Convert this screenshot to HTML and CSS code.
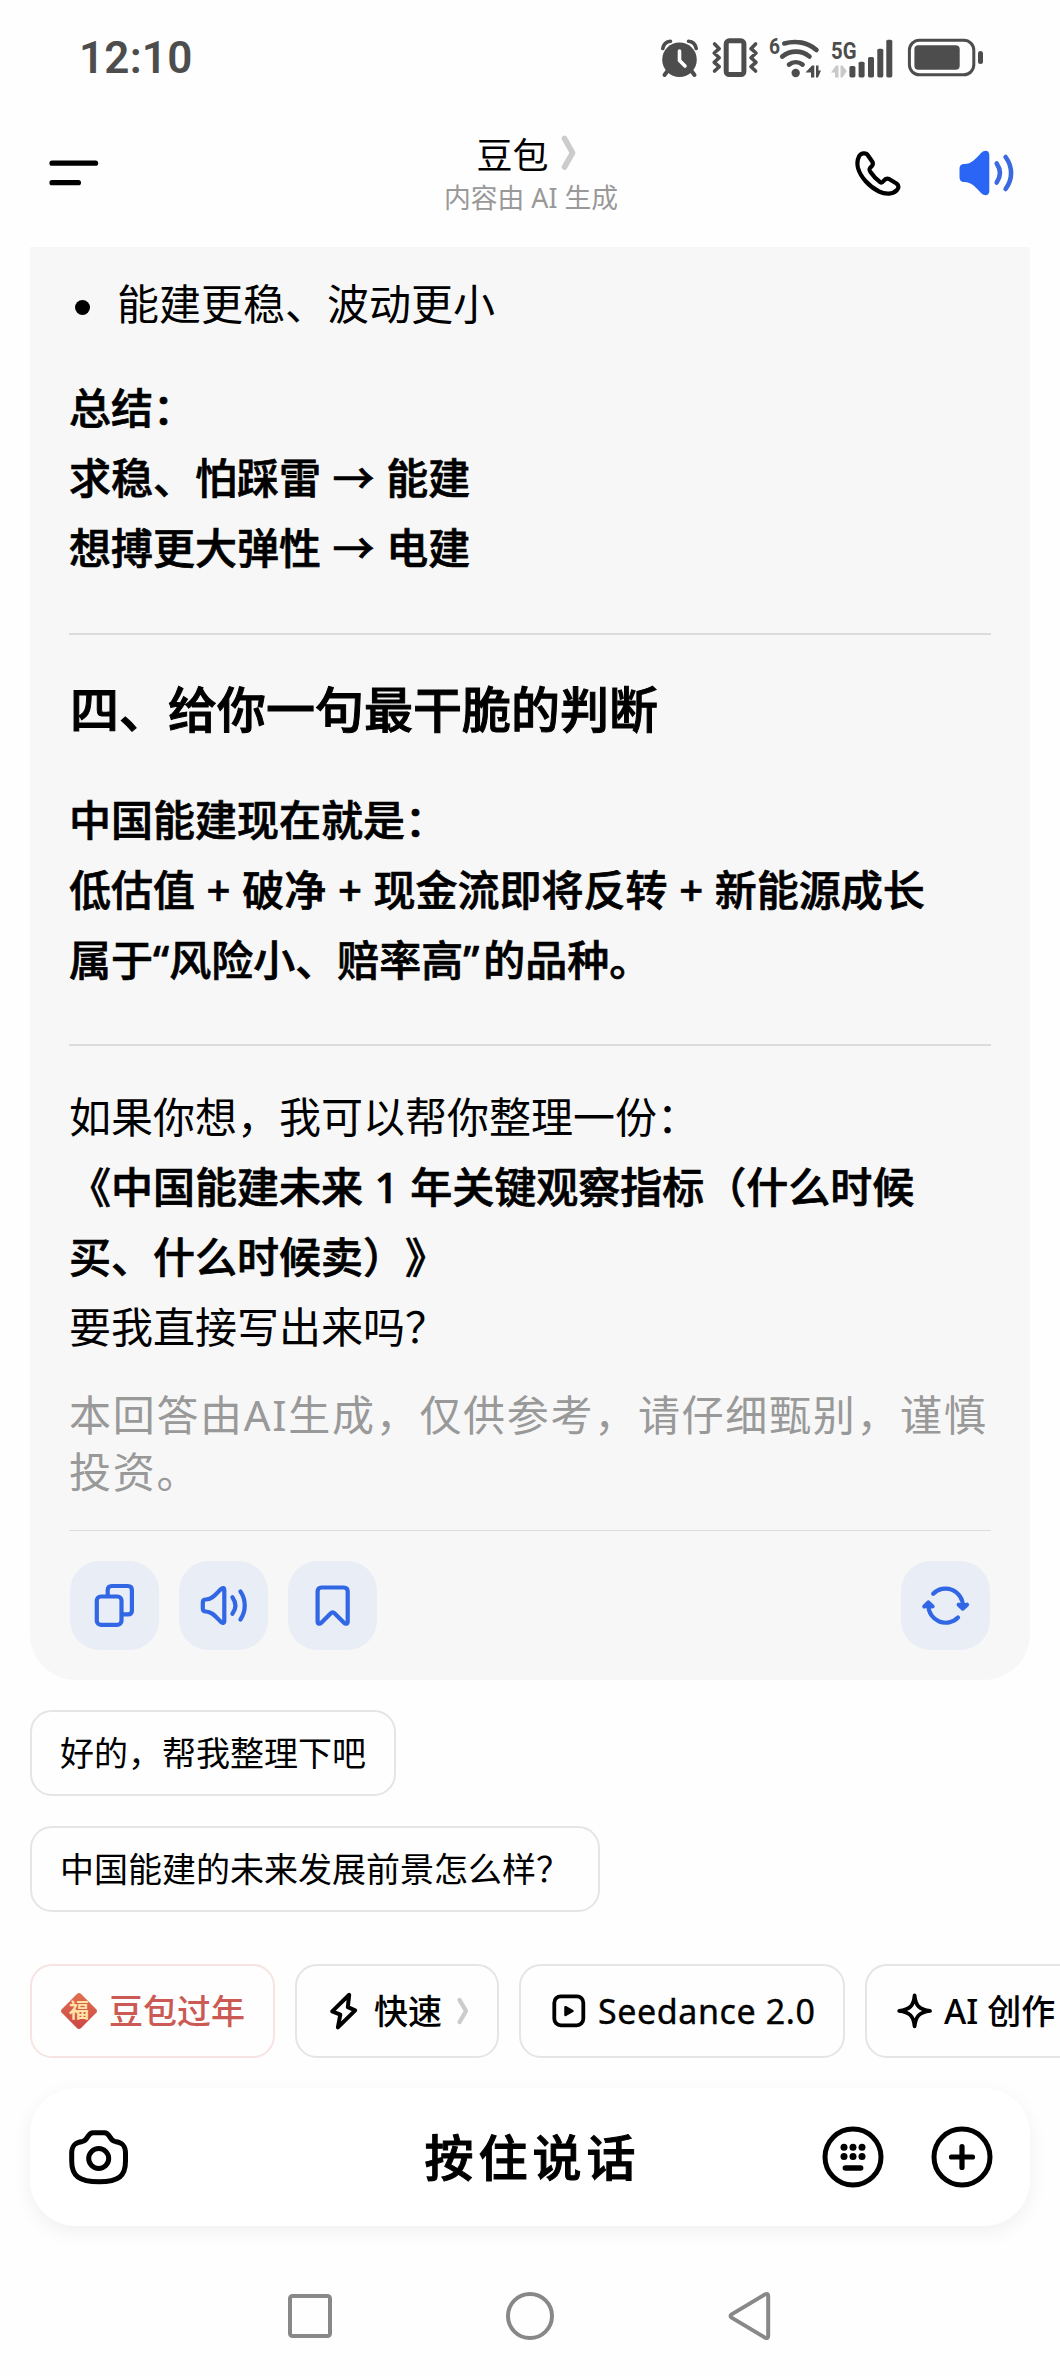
FILE: index.html
```html
<!DOCTYPE html>
<html lang="zh-CN">
<head>
    <meta charset="UTF-8">
    <meta name="viewport" content="width=device-width, initial-scale=1.0">
    <title>豆包</title>
    <link rel="stylesheet" href="styles.css">
</head>
<body>
    <div class="status-bar">
        <span class="time">12:10</span>
        <div class="status-icons">
            <!-- alarm -->
            <svg class="alarm" width="38" height="40" viewBox="0 0 38 40">
                <circle cx="18.5" cy="21.7" r="17.3" fill="#4d4d4d"/>
                <path d="M1.8 10.5C2.5 6.5 5.5 3.6 9.5 3.2M35.2 10.5C34.5 6.5 31.5 3.6 27.5 3.2" stroke="#4d4d4d" stroke-width="3.6" fill="none" stroke-linecap="round"/>
                <path d="M6.5 33L3.5 37M30.5 33L33.5 37" stroke="#4d4d4d" stroke-width="4" stroke-linecap="round"/>
                <path d="M18.5 13V22.5L24 28" stroke="#fff" stroke-width="3.6" fill="none" stroke-linecap="round" stroke-linejoin="round"/>
            </svg>
            <!-- vibrate -->
            <svg class="vibrate" width="47" height="40" viewBox="0 0 47 40">
                <rect x="14.2" y="2.8" width="17.7" height="33.7" rx="3" fill="none" stroke="#4d4d4d" stroke-width="5"/>
                <path d="M2.6 6L7.2 10.7L2.2 15L7.2 19.7L2.2 24.3L7.2 28.7L2.6 33M43.6 6L39 10.7L44 15L39 19.7L44 24.3L39 28.7L43.6 33" fill="none" stroke="#4d4d4d" stroke-width="3.6" stroke-linejoin="round" stroke-linecap="round"/>
            </svg>
            <!-- wifi 6 -->
            <svg class="wifi" width="52" height="42" viewBox="0 0 52 42">
                <text x="0" y="17" font-size="22" font-weight="700" textLength="11" lengthAdjust="spacingAndGlyphs" fill="#4d4d4d">6</text>
                <g fill="none" stroke="#4d4d4d" stroke-width="4.6" stroke-linecap="round">
                    <path d="M15.3 6.5C27 3 39 5.5 47.5 13"/>
                    <path d="M13.2 19.6C21.5 13 32.5 13 40.5 19.6"/>
                    <path d="M20 27.6C24 24.5 29.5 24.5 33.6 27.6"/>
                </g>
                <circle cx="26.7" cy="36" r="4.2" fill="#4d4d4d"/>
                <path d="M36.5 35.5L43 28.5H45.3V40.5H42V35.5ZM47 28.5H49.5V33.5H52L49 40.5H47Z" fill="#4d4d4d"/>
            </svg>
            <!-- 5G signal -->
            <svg class="signal" width="62" height="42" viewBox="0 0 62 42">
                <text x="0" y="21.5" font-size="24.5" font-weight="700" textLength="25.5" lengthAdjust="spacingAndGlyphs" fill="#4d4d4d">5G</text>
                <path d="M0 35.5L5 28.5H7.5V40.5H4V35.5ZM9.5 28.5H11.5L15.8 34L11.5 40.5H9.5Z" fill="#c9c9c9"/>
                <g fill="#4d4d4d">
                    <rect x="18.4" y="29" width="6" height="11.4" rx="1.6"/>
                    <rect x="27.6" y="24.7" width="6" height="15.7" rx="1.6"/>
                    <rect x="37" y="20" width="6" height="20.4" rx="1.6"/>
                    <rect x="46.3" y="11.7" width="6" height="28.7" rx="1.6"/>
                    <rect x="55.3" y="2.7" width="6" height="37.7" rx="1.6"/>
                </g>
            </svg>
            <!-- battery -->
            <svg class="battery" width="77" height="40" viewBox="0 0 77 40">
                <rect x="2.4" y="2.2" width="64.4" height="34.6" rx="10" fill="none" stroke="#4d4d4d" stroke-width="3"/>
                <rect x="7.4" y="7.3" width="45.3" height="24.4" rx="4" fill="#4d4d4d"/>
                <rect x="71" y="13" width="5" height="13" rx="2.5" fill="#4d4d4d"/>
            </svg>
        </div>
    </div>

    <header class="header">
        <svg class="menu" width="50" height="26" viewBox="0 0 50 26">
            <path d="M3 3.2H46.6M3 22.7H29.4" stroke="#000" stroke-width="5.2" stroke-linecap="round"/>
        </svg>
        <div class="title-box">
            <h1 class="title">豆包
                <svg width="15" height="36" viewBox="0 0 15 36">
                    <path d="M3.5 3.5L11.6 17.8L3.5 32" fill="none" stroke="#ccc" stroke-width="5.6" stroke-linecap="round" stroke-linejoin="round"/>
                </svg>
            </h1>
            <p class="subtitle">内容由 AI 生成</p>
        </div>
        <div class="header-actions">
            <svg width="48" height="48" viewBox="0 0 48 48">
                <path d="M5 7.5C6.5 4 12 3 14 6.5L18.5 13C19.5 15 19 16 17.5 17.5C15 19.5 14.8 20.5 16.5 23C19.5 27.5 22.5 30.5 26 33C27.5 34 28 34 29.5 32C31.5 29.3 33 29 35 30L42.5 34.5C45 36.5 45 39 43 41C39 45.5 31.5 45.5 25 42.5C15 37.5 6.5 28 4 19C3 15 3.3 11 5 7.5Z" fill="none" stroke="#000" stroke-width="4.2" stroke-linejoin="round"/>
            </svg>
            <svg width="58" height="48" viewBox="0 0 58 48">
                <path d="M1.5 20.5C1.5 16.5 3 15 6.5 15C13.5 15 17.5 10 23 4C27 .2 31.3 1.5 31.3 6V42C31.3 46.5 27 47.8 23 44C17.5 38 13.5 33 6.5 33C3 33 1.5 31.5 1.5 27.5Z" fill="#2a65f6"/>
                <path d="M38.7 14.5C42.8 20.5 42.8 27.5 38.7 33.5M47.6 8C54.9 18 54.9 30 47.6 40" fill="none" stroke="#3b6ae0" stroke-width="4.6" stroke-linecap="round"/>
            </svg>
        </div>
    </header>

    <main class="answer">
        <ul class="list">
            <li>能建更稳、波动更小</li>
        </ul>
        <p class="strong">总结：<br>求稳、怕踩雷 → 能建<br>想搏更大弹性 → 电建</p>
        <hr>
        <h2>四、给你一句最干脆的判断</h2>
        <p class="strong">中国能建现在就是：<br>低估值 + 破净 + 现金流即将反转 + 新能源成长<br>属于“风险小、赔率高<span class="quote">”</span>的品种。</p>
        <hr>
        <p class="ask">如果你想，我可以帮你整理一份：<br><b>《中国能建未来 1 年关键观察指标（什么时候买、什么时候卖）》</b><br>要我直接写出来吗？</p>
        <p class="disclaimer">本回答由AI生成，仅供参考，请仔细甄别，谨慎投资。</p>
        <div class="actions">
            <button class="action-btn">
                <svg width="48" height="48" viewBox="0 0 48 48">
                    <rect x="5.8" y="14.5" width="24.7" height="28.3" rx="4"/>
                    <path d="M16.7 13.5V8Q16.7 4 20.7 4H36.9Q40.9 4 40.9 8V28.4Q40.9 32.4 36.9 32.4H32"/>
                </svg>
            </button>
            <button class="action-btn">
                <svg width="48" height="48" viewBox="0 0 48 48">
                    <path d="M2.8 20.5Q2.8 17.5 5.8 17.5C12 17.5 15.5 12.5 20.8 7.2C22.8 5.2 24.3 5.8 24.3 8.2V38.8C24.3 41.2 22.8 41.8 20.8 39.8C15.5 34.5 12 29.5 5.8 29.5Q2.8 29.5 2.8 26.5Z"/>
                    <path d="M32.4 15.2C36.2 20.5 36.2 26.5 32.4 31.8M40.4 9.4C46.2 18 46.2 29 40.4 37.6"/>
                </svg>
            </button>
            <button class="action-btn">
                <svg width="48" height="48" viewBox="0 0 48 48">
                    <path d="M8.6 9.5Q8.6 5.5 12.6 5.5H34.7Q38.7 5.5 38.7 9.5V39.5C38.7 42 36.5 42.3 35 40.8L25.5 31.3Q23.6 29.4 21.8 31.3L12.3 40.8C10.8 42.3 8.6 42 8.6 39.5Z"/>
                </svg>
            </button>
            <button class="action-btn refresh">
                <svg width="48" height="48" viewBox="0 0 48 48">
                    <path d="M11.2 11.8A17.3 17.3 0 0 1 40.9 24M36 35.6A17.3 17.3 0 0 1 6.4 23.5"/>
                    <path d="M36.7 22.7L40.9 26.6L45 22.7L40.9 23.6ZM2.3 24.4L6.4 20.4L10.6 24.4L6.4 23.4Z" fill="#3166e4"/>
                </svg>
            </button>
        </div>
    </main>

    <div class="suggestions">
        <button class="suggestion">好的，帮我整理下吧</button>
        <button class="suggestion">中国能建的未来发展前景怎么样？</button>
    </div>

    <div class="tools">
        <button class="tool festival">
            <svg width="38" height="38" viewBox="0 0 38 38">
                <defs>
                    <linearGradient id="red" x1="0" y1="0" x2="1" y2="1">
                        <stop offset="0" stop-color="#e2714f"/>
                        <stop offset="1" stop-color="#cb4548"/>
                    </linearGradient>
                </defs>
                <rect x="5.5" y="5.5" width="27" height="27" rx="3" transform="rotate(45 19 19)" fill="url(#red)"/>
                <text class="fu" x="19" y="26" text-anchor="middle">福</text>
            </svg>
            豆包过年
        </button>
        <button class="tool">
            <svg width="38" height="38" viewBox="0 0 38 38">
                <path d="M24.2 2.8L22.8 15.2L30.2 18.3L12.9 35.4L15.3 22.6L7.2 19.4Z" fill="none" stroke="#000" stroke-width="4" stroke-linejoin="round"/>
            </svg>
            快速
            <svg class="chevron" width="12" height="28" viewBox="0 0 12 28">
                <path d="M2.6 3L9 14L2.6 25" fill="none" stroke="#ccc" stroke-width="4.4" stroke-linecap="round" stroke-linejoin="round"/>
            </svg>
        </button>
        <button class="tool">
            <svg width="38" height="38" viewBox="0 0 38 38">
                <rect x="5.3" y="4.3" width="29" height="29" rx="6.5" fill="none" stroke="#000" stroke-width="3.8"/>
                <path d="M16.5 15.2V23L23.5 19Z" fill="#000" stroke="#000" stroke-width="2.5" stroke-linejoin="round"/>
            </svg>
            <span class="latin">Seedance 2.0</span>
        </button>
        <button class="tool">
            <svg width="38" height="38" viewBox="0 0 38 38">
                <path d="M19.6 3.5C20.6 14 24.5 17.6 35 18.9C24.5 20.2 20.6 24 19.6 34.3C18.6 24 14.7 20.2 4.2 18.9C14.7 17.6 18.6 14 19.6 3.5Z" fill="none" stroke="#000" stroke-width="3.8" stroke-linejoin="round"/>
            </svg>
            AI 创作
        </button>
    </div>

    <div class="input-bar">
        <svg width="62" height="58" viewBox="0 0 62 58">
            <path d="M25 4.7H36.5C42 4.7 41.5 12.5 47 13.4C54 14.3 57.5 17 57.5 25.5V33C57.5 48 51 53.7 31 53.7S3.7 48 3.7 33V25.5C3.7 17 7.5 14.3 14.5 13.4C20 12.5 19.5 4.7 25 4.7Z" fill="none" stroke="#000" stroke-width="5"/>
            <circle cx="30.7" cy="30.5" r="10" fill="none" stroke="#000" stroke-width="5"/>
        </svg>
        <span class="hold">按住说话</span>
        <div class="input-actions">
            <svg width="62" height="62" viewBox="0 0 62 62">
                <circle cx="31" cy="31" r="28" fill="none" stroke="#000" stroke-width="5"/>
                <g fill="#000">
                    <circle cx="22" cy="21.3" r="3.5"/>
                    <circle cx="31" cy="21.3" r="3.5"/>
                    <circle cx="40" cy="21.3" r="3.5"/>
                    <circle cx="22" cy="30.6" r="3.5"/>
                    <circle cx="31" cy="30.6" r="3.5"/>
                    <circle cx="40" cy="30.6" r="3.5"/>
                </g>
                <path d="M23.4 42H38.6" stroke="#000" stroke-width="5.6" stroke-linecap="round"/>
            </svg>
            <svg width="62" height="62" viewBox="0 0 62 62">
                <circle cx="31" cy="31" r="28" fill="none" stroke="#000" stroke-width="5"/>
                <path d="M20.5 31H41.5M31 20.5V41.5" stroke="#000" stroke-width="5.2" stroke-linecap="round"/>
            </svg>
        </div>
    </div>

    <nav class="nav-bar">
        <svg width="48" height="50" viewBox="0 0 48 50">
            <rect x="4" y="5" width="40" height="40" rx="2.5"/>
        </svg>
        <svg width="50" height="50" viewBox="0 0 50 50">
            <circle cx="24" cy="25" r="22"/>
        </svg>
        <svg width="44" height="50" viewBox="0 0 44 50">
            <path d="M3.6 23.4Q1.4 25 3.6 26.6L37 46.6Q40.2 48 40.2 45V5Q40.2 2 37 3.4Z"/>
        </svg>
    </nav>
</body>
</html>
```
FILE: styles.css
```css
* {
    box-sizing: border-box;
    margin: 0;
    padding: 0;
}

body {
    width: 1060px;
    height: 2376px;
    overflow: hidden;
    background: #fefefe;
    color: #000;
    font-family: "Noto Sans", "Noto Sans CJK SC", sans-serif;
    text-spacing-trim: space-all;
}

svg {
    display: block;
    flex: none;
    overflow: visible;
}

button {
    background: none;
    border: none;
    color: inherit;
    font-family: inherit;
}

/* status bar */
.status-bar {
    display: flex;
    justify-content: space-between;
    align-items: center;
    height: 116px;
    padding: 0 76px 0 79px;
}

.time {
    font-family: Roboto, sans-serif;
    font-size: 44px;
    font-weight: 600;
    letter-spacing: 0.2px;
    color: #4d4d4d;
}

.status-icons {
    display: flex;
    align-items: center;
    font-family: Roboto, sans-serif;
}

.vibrate {
    margin-left: 13px;
}

.wifi {
    margin-left: 10px;
}

.signal {
    margin-left: 10px;
}

.battery {
    margin-left: 14px;
}

/* header */
.header {
    display: grid;
    grid-template-columns: 1fr auto 1fr;
    height: 131px;
    padding: 0 47px 0 49px;
}

.menu {
    margin-top: 44px;
}

.title-box {
    padding-top: 12px;
    text-align: center;
}

.title {
    display: flex;
    justify-content: center;
    align-items: center;
    gap: 12px;
    height: 50px;
    padding-right: 10px;
    font-size: 36px;
    font-weight: 400;
}

.subtitle {
    font-size: 26.8px;
    line-height: 40px;
    color: #999;
}

.header-actions {
    display: flex;
    justify-content: flex-end;
    gap: 56px;
    margin-right: -3px;
    padding-top: 33px;
}

/* answer card */
.answer {
    height: 1433px;
    margin: 0 30px;
    padding: 22px 39px 30px;
    background: #f7f7f7;
    border-radius: 0 0 46px 46px;
    font-size: 42px;
    line-height: 70px;
}

.list {
    list-style: none;
}

.list li {
    display: flex;
    align-items: center;
    gap: 27px;
    padding-left: 6px;
}

.list li::before {
    content: "";
    width: 15px;
    height: 15px;
    margin-top: 6px;
    border-radius: 50%;
    background: #000;
}

/* semibold sits between the medium and bold cuts of the CJK face */
.strong,
.answer b {
    font-weight: 500;
    word-spacing: 0.7px;
    -webkit-text-stroke: 0.7px #000;
}

.quote {
    letter-spacing: 4px;
}

.answer hr {
    height: 2px;
    border: none;
    background: #dcdcdc;
}

.list + .strong {
    margin: 34px 0 50px;
}

.answer h2 {
    margin-top: 39px;
    padding-left: 1px;
    font-size: 49px;
    font-weight: 500;
    line-height: 70px;
    -webkit-text-stroke: 1px #000;
}

h2 + .strong {
    margin: 41px 0 49px;
}

.ask {
    margin-top: 36px;
}

.disclaimer {
    margin-top: 24px;
    padding-bottom: 30px;
    border-bottom: 1px solid #dcdcdc;
    color: #999;
    letter-spacing: 1.7px;
    line-height: 57px;
}

.actions {
    display: flex;
    gap: 20px;
    padding: 30px 1px 0;
}

.action-btn {
    display: flex;
    justify-content: center;
    align-items: center;
    width: 89px;
    height: 89px;
    border-radius: 30px;
    background: #e8edf6;
}

.action-btn svg {
    fill: none;
    stroke: #3166e4;
    stroke-width: 4.2;
    stroke-linecap: round;
    stroke-linejoin: round;
}

.refresh {
    margin-left: auto;
}

/* suggested replies */
.suggestions {
    display: flex;
    flex-direction: column;
    align-items: flex-start;
    gap: 30px;
    margin: 30px 30px 0;
}

.suggestion {
    height: 86px;
    padding: 0 28px;
    border: 2px solid #e5e5e5;
    border-radius: 22px;
    font-size: 34px;
    line-height: 50px;
}

/* tool chips, run off the right edge */
.tools {
    display: flex;
    gap: 20px;
    margin: 52px 0 0 30px;
    overflow: hidden;
}

.tool {
    display: flex;
    flex: none;
    align-items: center;
    gap: 11px;
    height: 94px;
    padding: 0 28px;
    border: 2px solid #e5e5e5;
    border-radius: 22px;
    font-size: 34px;
    font-weight: 500;
    line-height: 50px;
    white-space: nowrap;
}

.festival {
    border-color: #f7e4e2;
    color: #cb5a54;
}

.fu {
    font-size: 20px;
    font-weight: 700;
    fill: #ffe2a4;
}

.chevron {
    margin-left: 4px;
}

.latin {
    width: 217px;
    font-weight: 400;
    letter-spacing: 0.6px;
    -webkit-text-stroke: 0.4px #000;
}

/* input bar */
.input-bar {
    display: grid;
    grid-template-columns: 1fr auto 1fr;
    align-items: center;
    height: 138px;
    margin: 30px 30px 0;
    padding: 0 37px 0 38px;
    border-radius: 46px;
    background: #fff;
    box-shadow: 0 6px 20px rgba(0, 0, 0, 0.06);
}

.hold {
    padding-left: 4px;
    font-size: 49px;
    font-weight: 500;
    letter-spacing: 5px;
    line-height: 70px;
    -webkit-text-stroke: 1px #000;
}

.input-actions {
    display: flex;
    justify-content: flex-end;
    gap: 47px;
}

/* system navigation */
.nav-bar {
    display: flex;
    align-items: center;
    justify-content: space-between;
    margin-top: 65px;
    padding: 0 288px 0 286px;
}

.nav-bar svg {
    fill: none;
    stroke: #888;
    stroke-width: 4;
    stroke-linejoin: round;
}
```
